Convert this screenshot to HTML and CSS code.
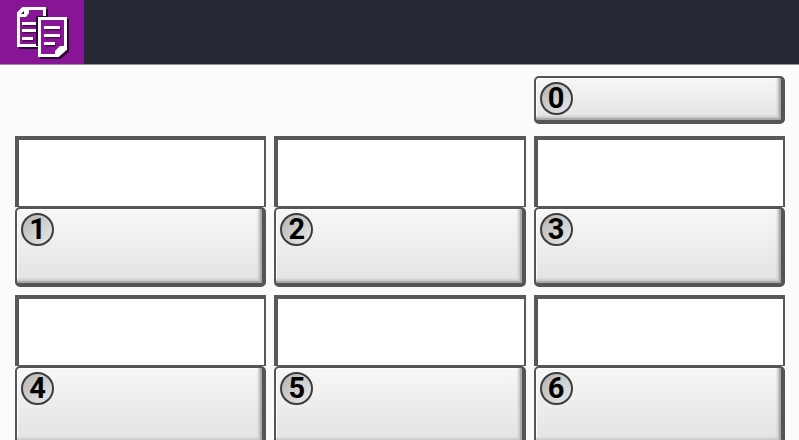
FILE: index.html
```html
<!DOCTYPE html>
<html lang="en">
<head>
  <meta charset="UTF-8" />
  <meta name="viewport" content="width=device-width, initial-scale=1.0" />
  <title>Copy</title>
  <link rel="stylesheet" href="styles.css">
</head>
<body>
  <header class="topbar">
    <div class="app-icon">
      <svg class="copy-icon" viewBox="0 0 56 54" aria-hidden="true">
        <!-- shadow -->
        <g fill="none" stroke="#2b0733" stroke-width="3" transform="translate(2 2)">
          <path d="M9 3.5H30.5V40.5H4.5V8Z" />
          <path d="M25.5 13.5H51.5V44L44 50.5H25.5Z" />
        </g>
        <!-- back page -->
        <path d="M9 3.5H30.5V40.5H4.5V8Z" fill="#881496" stroke="#fff" stroke-width="3" />
        <path d="M5 12V8L10 3H15V8L12 12Z" fill="#fff" />
        <path d="M7 9L10 6V9Z" fill="#2b0733" />
        <path d="M9 20H22M9 27H22M9 35H20" stroke="#4d0a57" stroke-width="3" />
        <path d="M8 18.5H22M8 25.5H22M8 33.5H19" stroke="#fff" stroke-width="3" />
        <!-- front page -->
        <path d="M22 11H32V41H22Z" fill="#2b0733" />
        <path d="M25.5 13.5H51.5V44L44 50.5H25.5Z" fill="#881496" stroke="#fff" stroke-width="3" />
        <path d="M41 51V46L46 41H52V44L44 51Z" fill="#fff" />
        <path d="M31 24H47M31 32H47M31 40H42" stroke="#4d0a57" stroke-width="3" />
        <path d="M30 22.5H46M30 30.5H46M30 38.5H41" stroke="#fff" stroke-width="3" />
      </svg>
    </div>
  </header>

  <main class="panel">
    <div class="cell cell-top">
      <button class="key key-short" type="button"><span class="num">0</span></button>
    </div>
    <div class="cell">
      <div class="field"></div>
      <button class="key" type="button"><span class="num">1</span></button>
    </div>
    <div class="cell">
      <div class="field"></div>
      <button class="key" type="button"><span class="num">2</span></button>
    </div>
    <div class="cell">
      <div class="field"></div>
      <button class="key" type="button"><span class="num">3</span></button>
    </div>
    <div class="cell">
      <div class="field"></div>
      <button class="key" type="button"><span class="num">4</span></button>
    </div>
    <div class="cell">
      <div class="field"></div>
      <button class="key" type="button"><span class="num">5</span></button>
    </div>
    <div class="cell">
      <div class="field"></div>
      <button class="key" type="button"><span class="num">6</span></button>
    </div>
  </main>
</body>
</html>
```

FILE: styles.css
```css
* {
  box-sizing: border-box;
}

body {
  margin: 0;
  height: 100vh;
  overflow: hidden;
  background: #fbfbfb;
  font-family: Roboto, "Liberation Sans", Arial, sans-serif;
}

.topbar {
  display: flex;
  height: 65px;
  background: #242933;
  border-bottom: 1px solid #8f9195;
}

.app-icon {
  width: 84px;
  padding: 5px 14px;
  background: #881496;
}

.copy-icon {
  display: block;
  width: 56px;
  height: 54px;
}

.panel {
  display: grid;
  grid-template-columns: repeat(3, 1fr);
  gap: 8px;
  padding: 11px 14px 11px 15px;
}

.cell {
  display: flex;
  flex-direction: column;
}

.cell-top {
  grid-column: 3;
  padding-bottom: 4px;
}

.field {
  height: 71px;
  background: #fff;
  border: solid #585858;
  border-width: 4px 2px 1px 4px;
}

.key {
  display: flex;
  align-items: flex-start;
  height: 80px;
  padding: 4px;
  border: solid #555;
  border-width: 2px 4px 4px 2px;
  border-radius: 5px;
  background: linear-gradient(#f7f7f7, #e3e3e3);
  box-shadow: inset -2px -2px 1px #a8a8a8, inset -4px -4px 2px #cecece, inset 1px 1px 1px #fff;
  font-family: inherit;
  cursor: pointer;
}

.key-short {
  height: 48px;
}

.num {
  width: 33px;
  height: 33px;
  border: 2px solid #3c3c3c;
  border-radius: 50%;
  background: linear-gradient(135deg, #b4b4b4, #e9e9e9);
  color: #000;
  font-size: 29px;
  font-weight: bold;
  line-height: 29px;
  text-align: center;
}
```
